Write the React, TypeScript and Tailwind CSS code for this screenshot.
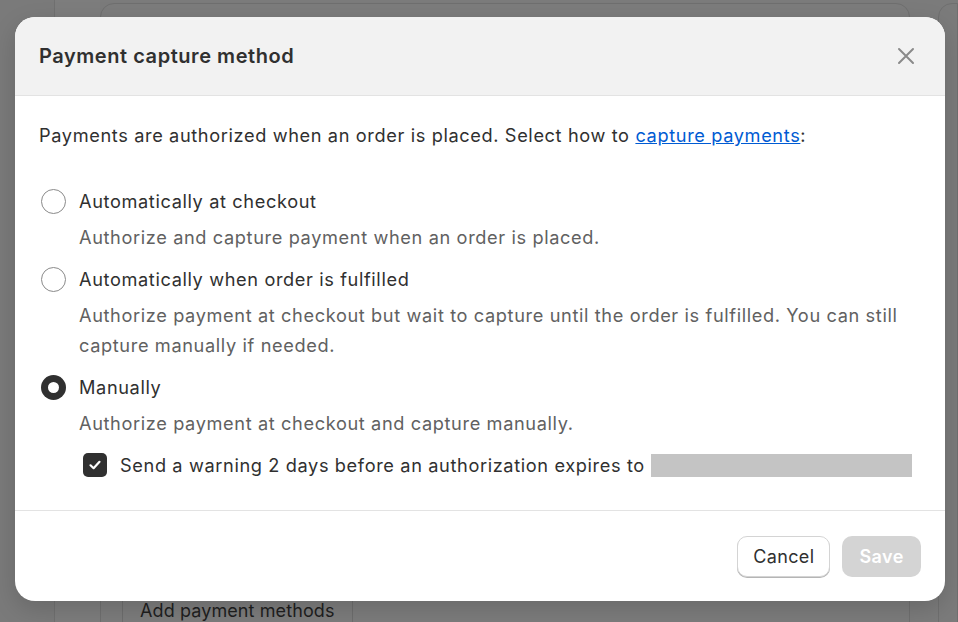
import React from "react";

function Radio({ checked }: { checked?: boolean }) {
  if (checked) {
    return (
      <div className="w-[25px] h-[25px] rounded-full bg-[#303030] flex items-center justify-center shrink-0">
        <div className="w-[11px] h-[11px] rounded-full bg-white" />
      </div>
    );
  }
  return <div className="w-[25px] h-[25px] rounded-full border border-[#8a8a8a] bg-white shrink-0" />;
}

export default function App() {
  return (
    <div
      className="relative w-[958px] h-[622px] overflow-hidden bg-[#7b7b7b]"
      style={{ fontFamily: "Inter, 'Noto Sans', sans-serif" }}
    >
      {/* underlying page (dimmed) */}
      <div className="flex h-full">
        <div className="w-[55px] h-full border-r border-[#707070] bg-[#7a7a7a]" />
        <div className="w-[45px] h-full bg-[#7d7d7d]" />
        <div className="w-[810px] h-full flex flex-col mt-[3px] rounded-t-[14px] border border-[#6f6f6f] bg-[#7c7c7c]">
          <div className="flex-1" />
          <div className="flex pl-[21px]">
            <div className="h-[48px] pt-[23px] pl-[17px] pr-[17px] border-x border-[#6d6d6d] text-[18px] tracking-[0.1px] leading-[24px] text-[#1f1f1f]">
              Add payment methods
            </div>
          </div>
        </div>
        <div className="w-[28px] h-full" />
        <div className="flex-1 h-full mt-[3px] rounded-tl-[14px] border border-[#6f6f6f]" />
      </div>

      {/* modal */}
      <div className="absolute left-[15px] top-[17px] w-[930px] h-[584px] rounded-[20px] bg-white overflow-hidden flex flex-col shadow-[0_8px_24px_rgba(0,0,0,0.15)]">
        <div className="h-[79px] shrink-0 bg-[#f2f2f2] border-b border-[#e3e3e3] flex items-center justify-between pl-[24px] pr-[28px]">
          <div className="text-[20px] font-semibold text-[#303030] tracking-[0.55px]">Payment capture method</div>
          <svg width="22" height="22" viewBox="0 0 22 22" fill="none" stroke="#8a8a8a" strokeWidth="2" strokeLinecap="round">
            <path d="M4 4L18 18M18 4L4 18" />
          </svg>
        </div>

        <div className="flex-1 pl-[24px] pr-[24px] pt-[24px] text-[18.2px] tracking-[0.62px] text-[#303030] leading-[30px]">
          <div>
            Payments are authorized when an order is placed. Select how to{" "}
            <span className="text-[#005bd3] underline">capture payments</span>:
          </div>

          <div className="mt-[36px] flex items-center gap-[13px] ml-[2px]">
            <Radio />
            <span>Automatically at checkout</span>
          </div>
          <div className="ml-[40px] mt-[6px] text-[#616161]">Authorize and capture payment when an order is placed.</div>

          <div className="mt-[12px] flex items-center gap-[13px] ml-[2px]">
            <Radio />
            <span>Automatically when order is fulfilled</span>
          </div>
          <div className="ml-[40px] mt-[6px] text-[#616161]">
            Authorize payment at checkout but wait to capture until the order is fulfilled. You can still capture manually if needed.
          </div>

          <div className="mt-[12px] flex items-center gap-[13px] ml-[2px]">
            <Radio checked />
            <span>Manually</span>
          </div>
          <div className="ml-[40px] mt-[6px] text-[#616161]">Authorize payment at checkout and capture manually.</div>

          <div className="ml-[44px] mt-[12px] flex items-center gap-[13px]">
            <div className="w-[24px] h-[24px] rounded-[5px] bg-[#303030] flex items-center justify-center shrink-0">
              <svg width="16" height="16" viewBox="0 0 16 16" fill="none" stroke="white" strokeWidth="2.2" strokeLinecap="round" strokeLinejoin="round">
                <path d="M3.5 8.3L6.6 11.2L12.5 4.8" />
              </svg>
            </div>
            <span>Send a warning 2 days before an authorization expires to</span>
            <div className="w-[261px] h-[23px] bg-[#c4c4c4] -ml-[7px]" />
          </div>
        </div>

        <div className="h-[91px] shrink-0 border-t border-[#e3e3e3] flex items-start justify-end gap-[12px] pr-[24px] pt-[25px]">
          <button className="h-[41px] px-[15px] rounded-[10px] bg-white border border-[#d4d4d4] shadow-[0_1px_0_#b5b5b5] text-[18px] tracking-[0.35px] text-[#303030]">
            Cancel
          </button>
          <button className="h-[41px] px-[17px] rounded-[10px] bg-[#d4d4d4] text-[18px] tracking-[0.5px] text-white font-semibold">
            Save
          </button>
        </div>
      </div>
    </div>
  );
}
